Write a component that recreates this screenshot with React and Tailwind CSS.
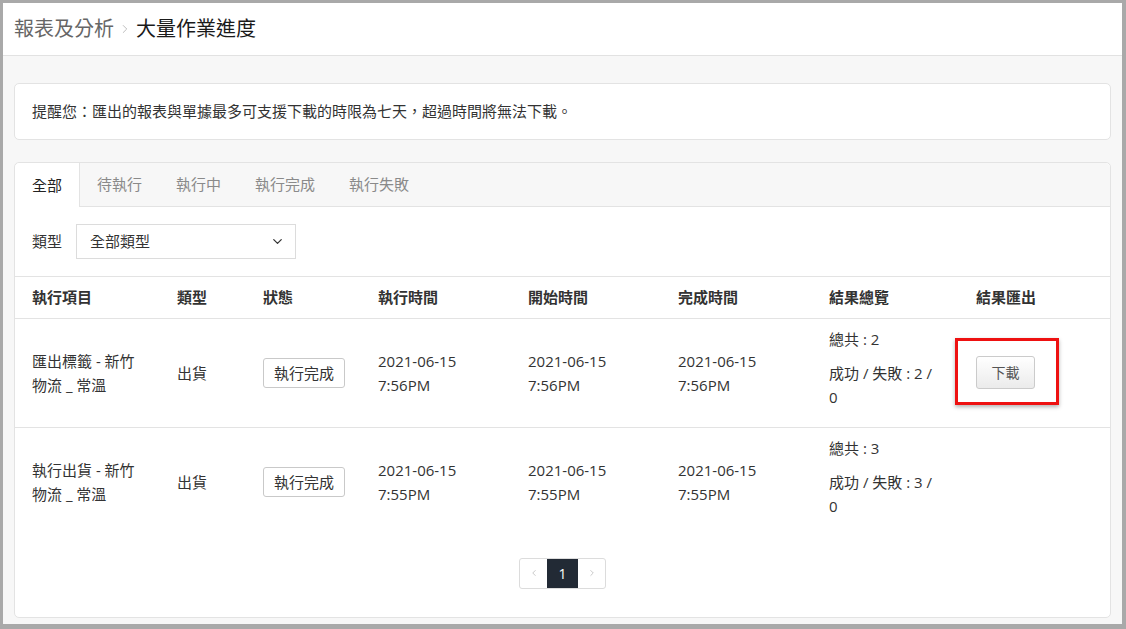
import React from 'react';
import { ChevronDown, ChevronRight, ChevronLeft } from 'lucide-react';

const TABS = ['全部', '待執行', '執行中', '執行完成', '執行失敗'];

const COLUMNS = [
    { label: '執行項目', w: 'w-[145px]' },
    { label: '類型', w: 'w-[86px]' },
    { label: '狀態', w: 'w-[115px]' },
    { label: '執行時間', w: 'w-[150px]' },
    { label: '開始時間', w: 'w-[150px]' },
    { label: '完成時間', w: 'w-[151px]' },
    { label: '結果總覽', w: 'w-[147px]' },
    { label: '結果匯出', w: '' },
];

const ROWS = [
    { name: ['匯出標籤 - 新竹', '物流 _ 常溫'], type: '出貨', time: '7:56PM', total: 2, ok: 2, fail: 0, download: true },
    { name: ['執行出貨 - 新竹', '物流 _ 常溫'], type: '出貨', time: '7:55PM', total: 3, ok: 3, fail: 0, download: false },
];

const DateCell = ({ time }) => (
    <td className="pl-[17px] pr-4 py-2 align-middle">
        2021-06-15<br />{time}
    </td>
);

export default function App() {
    return (
        <div
            className="w-[1126px] h-[629px] bg-[#a9a9a9] pt-[3px] pl-[3px] pr-[4px] pb-[5px] text-[#333]"
            style={{ fontFamily: '"Open Sans", "Noto Sans CJK TC", sans-serif' }}
        >
            <div className="h-full flex flex-col bg-[#f7f7f7]">
                {/* 頁首麵包屑 */}
                <header className="h-[53px] shrink-0 bg-white border-b border-[#e2e2e2] flex items-center pl-[11px] text-[20px]">
                    <span className="text-[#666]">報表及分析</span>
                    <ChevronRight size={14} strokeWidth={1.5} className="mx-[4px] text-[#b5b5b5]" />
                    <span className="text-[#1a1a1a]">大量作業進度</span>
                </header>

                <main className="flex-1 px-[11px] pt-[27px]">
                    {/* 提醒 */}
                    <div className="h-[57px] bg-white border border-[#e3e3e3] rounded-[5px] flex items-center pl-[17px] text-[15px]">
                        提醒您：匯出的報表與單據最多可支援下載的時限為七天，超過時間將無法下載。
                    </div>

                    {/* 主要卡片 */}
                    <div className="mt-[22px] h-[456px] bg-white border border-[#e3e3e3] rounded-[5px] flex flex-col">
                        <div className="h-[44px] flex bg-[#f7f7f7] border-b border-[#e3e3e3] rounded-t-[5px] text-[15px]">
                            {TABS.map((tab, i) => (
                                <div
                                    key={tab}
                                    className={
                                        i === 0
                                            ? 'px-[17px] flex items-center bg-white border-r border-[#e3e3e3] -mb-px rounded-tl-[5px] text-[#222]'
                                            : 'px-[17px] flex items-center text-[#8a8a8a]'
                                    }
                                >
                                    {tab}
                                </div>
                            ))}
                        </div>

                        {/* 篩選 */}
                        <div className="h-[70px] flex items-center pl-[17px] gap-[14px] border-b border-[#e3e3e3] text-[15px]">
                            <span>類型</span>
                            <div className="w-[220px] h-[35px] border border-[#dcdcdc] flex items-center justify-between pl-[13px] pr-[10px]">
                                <span>全部類型</span>
                                <ChevronDown size={15} strokeWidth={2} className="text-[#333]" />
                            </div>
                        </div>

                        <table className="w-full table-fixed text-[15px] leading-6 border-collapse">
                            <thead>
                                <tr className="h-[41px] border-b border-[#e3e3e3]">
                                    {COLUMNS.map((c) => (
                                        <th key={c.label} className={`${c.w} pl-[17px] text-left font-bold align-middle`}>
                                            {c.label}
                                        </th>
                                    ))}
                                </tr>
                            </thead>
                            <tbody>
                                {ROWS.map((r, i) => (
                                    <tr key={i} className={i === 0 ? 'border-b border-[#e3e3e3]' : ''}>
                                        <td className="pl-[17px] pr-4 py-2 align-middle">
                                            {r.name[0]}<br />{r.name[1]}
                                        </td>
                                        <td className="pl-[17px] py-2 align-middle">{r.type}</td>
                                        <td className="pl-[17px] py-2 align-middle">
                                            <span className="inline-flex items-center h-[30px] px-[10px] border border-[#c9c9c9] rounded-[3px]">
                                                執行完成
                                            </span>
                                        </td>
                                        <DateCell time={r.time} />
                                        <DateCell time={r.time} />
                                        <DateCell time={r.time} />
                                        <td className="pl-[17px] py-2 align-middle">
                                            <p className="mb-[10px]">總共 : {r.total}</p>
                                            <p className="mb-[10px]">
                                                成功 / 失敗 : {r.ok} /<br />{r.fail}
                                            </p>
                                        </td>
                                        <td className="pl-[17px] py-2 align-middle">
                                            {r.download && (
                                                <div className="relative inline-block">
                                                    <button className="h-[33px] w-[59px] text-[14px] text-[#555] border border-[#cbcbcb] rounded-[3px] bg-gradient-to-b from-white to-[#ebebeb]">
                                                        下載
                                                    </button>
                                                    <div className="absolute -left-[21px] -top-[18px] -right-[24px] -bottom-[16px] border-[3px] border-[#ee1111] shadow-[0_2px_4px_rgba(0,0,0,0.3)]" />
                                                </div>
                                            )}
                                        </td>
                                    </tr>
                                ))}
                            </tbody>
                        </table>

                        {/* 分頁 */}
                        <div className="flex justify-center mt-[22px]">
                            <div className="flex h-[31px] border border-[#dcdcdc] rounded-[3px] overflow-hidden text-[14px]">
                                <div className="w-[27px] flex items-center justify-center text-[#aaa]">
                                    <ChevronLeft size={10} strokeWidth={1.5} />
                                </div>
                                <div className="w-[31px] flex items-center justify-center bg-[#222a35] text-white">1</div>
                                <div className="w-[27px] flex items-center justify-center text-[#aaa]">
                                    <ChevronRight size={10} strokeWidth={1.5} />
                                </div>
                            </div>
                        </div>
                    </div>
                </main>
            </div>
        </div>
    );
}
